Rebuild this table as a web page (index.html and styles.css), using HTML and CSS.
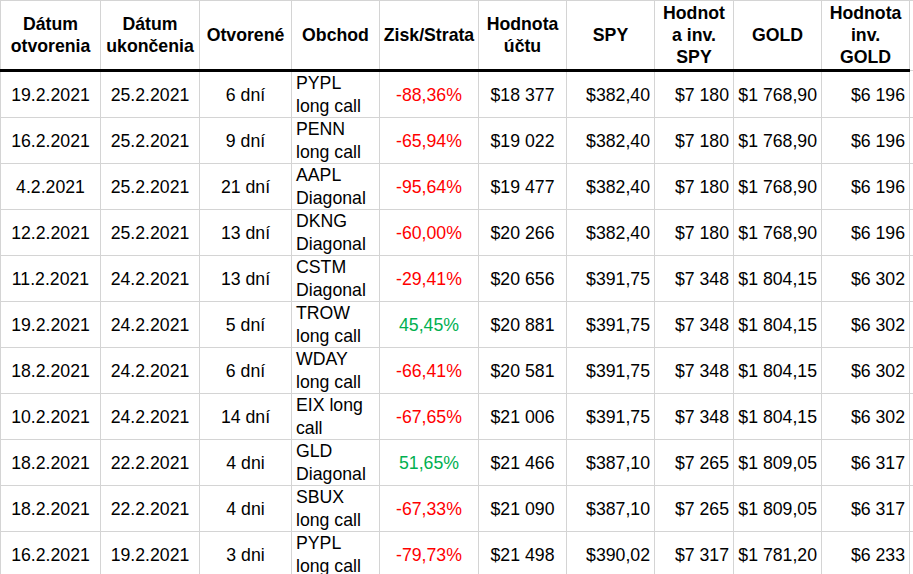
FILE: index.html
```html
<!DOCTYPE html>
<html lang="sk">
<head>
<meta charset="utf-8">
<title>Obchody</title>
<link rel="stylesheet" href="styles.css">
</head>
<body>
<table class="sheet">
  <colgroup>
    <col class="w100"><col class="w99"><col class="w92"><col class="w88"><col class="w99">
    <col class="w88"><col class="w88"><col class="w79"><col class="w88"><col class="w88"><col class="wpad">
  </colgroup>
  <thead>
    <tr>
      <th>Dátum<br>otvorenia</th>
      <th>Dátum<br>ukončenia</th>
      <th>Otvorené</th>
      <th>Obchod</th>
      <th>Zisk/Strata</th>
      <th>Hodnota<br>účtu</th>
      <th>SPY</th>
      <th>Hodnot<br>a inv.<br>SPY</th>
      <th>GOLD</th>
      <th>Hodnota<br>inv.<br>GOLD</th>
      <th class="pad"></th>
    </tr>
  </thead>
  <tbody>
    <tr><td class="c">19.2.2021</td><td class="c">25.2.2021</td><td class="c">6 dní</td><td class="trade">PYPL<br>long call</td><td class="c loss">-88,36%</td><td class="c">$18 377</td><td class="r">$382,40</td><td class="r">$7 180</td><td class="r">$1 768,90</td><td class="r">$6 196</td><td class="pad"></td></tr>
    <tr><td class="c">16.2.2021</td><td class="c">25.2.2021</td><td class="c">9 dní</td><td class="trade">PENN<br>long call</td><td class="c loss">-65,94%</td><td class="c">$19 022</td><td class="r">$382,40</td><td class="r">$7 180</td><td class="r">$1 768,90</td><td class="r">$6 196</td><td class="pad"></td></tr>
    <tr><td class="c">4.2.2021</td><td class="c">25.2.2021</td><td class="c">21 dní</td><td class="trade">AAPL<br>Diagonal</td><td class="c loss">-95,64%</td><td class="c">$19 477</td><td class="r">$382,40</td><td class="r">$7 180</td><td class="r">$1 768,90</td><td class="r">$6 196</td><td class="pad"></td></tr>
    <tr><td class="c">12.2.2021</td><td class="c">25.2.2021</td><td class="c">13 dní</td><td class="trade">DKNG<br>Diagonal</td><td class="c loss">-60,00%</td><td class="c">$20 266</td><td class="r">$382,40</td><td class="r">$7 180</td><td class="r">$1 768,90</td><td class="r">$6 196</td><td class="pad"></td></tr>
    <tr><td class="c">11.2.2021</td><td class="c">24.2.2021</td><td class="c">13 dní</td><td class="trade">CSTM<br>Diagonal</td><td class="c loss">-29,41%</td><td class="c">$20 656</td><td class="r">$391,75</td><td class="r">$7 348</td><td class="r">$1 804,15</td><td class="r">$6 302</td><td class="pad"></td></tr>
    <tr><td class="c">19.2.2021</td><td class="c">24.2.2021</td><td class="c">5 dní</td><td class="trade">TROW<br>long call</td><td class="c gain">45,45%</td><td class="c">$20 881</td><td class="r">$391,75</td><td class="r">$7 348</td><td class="r">$1 804,15</td><td class="r">$6 302</td><td class="pad"></td></tr>
    <tr><td class="c">18.2.2021</td><td class="c">24.2.2021</td><td class="c">6 dní</td><td class="trade">WDAY<br>long call</td><td class="c loss">-66,41%</td><td class="c">$20 581</td><td class="r">$391,75</td><td class="r">$7 348</td><td class="r">$1 804,15</td><td class="r">$6 302</td><td class="pad"></td></tr>
    <tr><td class="c">10.2.2021</td><td class="c">24.2.2021</td><td class="c">14 dní</td><td class="trade">EIX long<br>call</td><td class="c loss">-67,65%</td><td class="c">$21 006</td><td class="r">$391,75</td><td class="r">$7 348</td><td class="r">$1 804,15</td><td class="r">$6 302</td><td class="pad"></td></tr>
    <tr><td class="c">18.2.2021</td><td class="c">22.2.2021</td><td class="c">4 dni</td><td class="trade">GLD<br>Diagonal</td><td class="c gain">51,65%</td><td class="c">$21 466</td><td class="r">$387,10</td><td class="r">$7 265</td><td class="r">$1 809,05</td><td class="r">$6 317</td><td class="pad"></td></tr>
    <tr><td class="c">18.2.2021</td><td class="c">22.2.2021</td><td class="c">4 dni</td><td class="trade">SBUX<br>long call</td><td class="c loss">-67,33%</td><td class="c">$21 090</td><td class="r">$387,10</td><td class="r">$7 265</td><td class="r">$1 809,05</td><td class="r">$6 317</td><td class="pad"></td></tr>
    <tr><td class="c">16.2.2021</td><td class="c">19.2.2021</td><td class="c">3 dni</td><td class="trade">PYPL<br>long call</td><td class="c loss">-79,73%</td><td class="c">$21 498</td><td class="r">$390,02</td><td class="r">$7 317</td><td class="r">$1 781,20</td><td class="r">$6 233</td><td class="pad"></td></tr>
  </tbody>
</table>
</body>
</html>
```

FILE: styles.css
```css
html, body {
  margin: 0;
  padding: 0;
  background: #ffffff;
  overflow: hidden;
}

.sheet {
  border-collapse: collapse;
  table-layout: fixed;
  width: 913px;
  font-family: "Liberation Sans", Arial, sans-serif;
  font-size: 17.7px;
  color: #000000;
}

.w100 { width: 100px; }
.w99 { width: 99px; }
.w92 { width: 92px; }
.w88 { width: 88px; }
.w79 { width: 79px; }
.wpad { width: 4px; }

.sheet th,
.sheet td {
  border: 1px solid #d4d4d4;
  padding: 0 4px;
  white-space: nowrap;
  overflow: hidden;
}

.sheet thead tr {
  height: 70px;
}

.sheet th {
  font-weight: bold;
  line-height: 22px;
  text-align: center;
  vertical-align: middle;
  border-bottom: 3px solid #000000;
  padding: 0 2px;
}

.sheet th.pad {
  border-bottom: 1px solid #d4d4d4;
}

.sheet tbody tr {
  height: 45px;
}

.sheet td {
  line-height: 22px;
  vertical-align: middle;
}

.sheet td.c { text-align: center; }
.sheet td.r { text-align: right; }

.sheet td.trade {
  text-align: left;
  vertical-align: top;
  line-height: 22.5px;
}

.sheet td.loss { color: #ff0000; }
.sheet td.gain { color: #00b050; }

.sheet .pad {
  padding: 0;
}
```
